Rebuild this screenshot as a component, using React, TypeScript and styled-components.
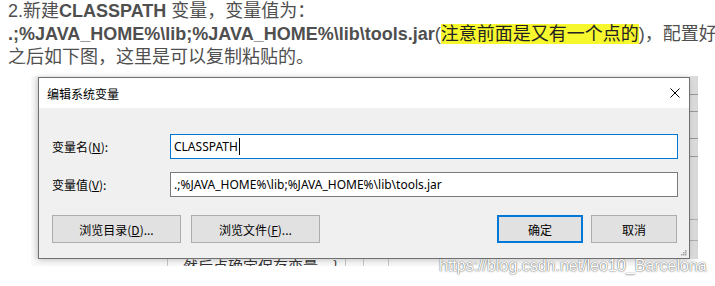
import React from "react";
import styled, { createGlobalStyle } from "styled-components";

const GlobalStyle = createGlobalStyle`
  html, body { margin: 0; padding: 0; background: #fff; }
  body { width: 715px; height: 286px; overflow: hidden; }
`;

const Article = styled.div`
  padding-left: 8px;
  font-family: "Liberation Sans", "Noto Sans CJK SC", sans-serif;
  font-size: 18px;
  line-height: 23px;
  color: #4f4f4f;
  white-space: nowrap;
`;

const Line = styled.div``;

const Strong = styled.b`
  font-size: 18px;
  font-weight: bold;
`;

const Mark = styled.span`
  background: #f7f72e;
  color: #222;
`;

const Shot = styled.div`
  position: relative;
  margin: 7px 0 0 31px;
  width: 667px;
  height: 190px;
  box-sizing: border-box;
  padding: 1px 8px 7px 7px;
  background: linear-gradient(to right, #fbfbfb, #eeeeee 7px, #f7f7f7 7px);
`;

const RightStrip = styled.div`
  position: absolute;
  top: 0;
  right: 0;
  bottom: 7px;
  width: 8px;
  background:
    linear-gradient(#9a9a9a, #9a9a9a) 0 18px / 100% 1px no-repeat,
    linear-gradient(#9a9a9a, #9a9a9a) 0 35px / 100% 1px no-repeat,
    linear-gradient(#9a9a9a, #9a9a9a) 0 62px / 100% 1px no-repeat,
    linear-gradient(#9a9a9a, #9a9a9a) 0 80px / 100% 1px no-repeat,
    linear-gradient(#b0b0b0, #b0b0b0) 0 143px / 100% 1px no-repeat,
    linear-gradient(#b0b0b0, #b0b0b0) 0 164px / 100% 1px no-repeat,
    linear-gradient(to right, #e6e6e6, #d6d6d6);
`;

const BottomStrip = styled.div`
  position: absolute;
  left: 0;
  right: 0;
  bottom: 0;
  height: 7px;
  overflow: hidden;
  background:
    linear-gradient(#c8c8c8, #c8c8c8) 136px 0 / 1px 100% no-repeat,
    linear-gradient(#c8c8c8, #c8c8c8) 314px 0 / 1px 100% no-repeat,
    linear-gradient(#c8c8c8, #c8c8c8) 332px 0 / 1px 100% no-repeat,
    linear-gradient(#c8c8c8, #c8c8c8) 357px 0 / 1px 100% no-repeat,
    #f9f9f9;
`;

const BehindText = styled.span`
  position: absolute;
  left: 152px;
  top: -3px;
  font-family: "Noto Sans CJK SC", sans-serif;
  font-size: 15px;
  line-height: 20px;
  color: #333;
  white-space: nowrap;
`;

const Dialog = styled.div`
  position: relative;
  z-index: 1;
  width: 652px;
  height: 182px;
  box-sizing: border-box;
  border: 1px solid #707070;
  background: #fff;
  box-shadow: 0 1px 6px rgba(0, 0, 0, 0.22);
  font-family: "Noto Sans", "Noto Sans CJK SC", sans-serif;
  font-size: 12px;
  color: #000;
`;

const TitleBar = styled.div`
  height: 30px;
  display: flex;
  align-items: center;
  justify-content: space-between;
  padding: 0 9px 0 8px;
  background: #fff;
  font-family: "Noto Sans CJK SC", sans-serif;
`;

const Body = styled.div`
  position: relative;
  height: 150px;
  box-sizing: border-box;
  padding: 26px 11px 0 13px;
  background: #f0f0f0;
`;

const Field = styled.div`
  display: grid;
  grid-template-columns: 118px 508px;
  align-items: center;
  height: 25px;
  & + & {
    margin-top: 13px;
  }
`;

const Label = styled.div`
  font-family: "Noto Sans CJK SC", sans-serif;
  font-size: 12px;
  line-height: 16px;
`;

const TextBox = styled.div<{ $active?: boolean }>`
  height: 25px;
  box-sizing: border-box;
  border: 1px solid ${(p) => (p.$active ? "#0078d7" : "#7a7a7a")};
  background: #fff;
  padding-left: 3px;
  display: flex;
  align-items: center;
  font-family: "Noto Sans", sans-serif;
  font-size: 12px;
  white-space: nowrap;
`;

const Caret = styled.span`
  display: inline-block;
  width: 1px;
  height: 17px;
  background: #000;
  margin-left: 1px;
`;

const ButtonRow = styled.div`
  display: flex;
  justify-content: space-between;
  margin-top: 18px;
  padding-right: 1px;
`;

const Group = styled.div<{ $gap: number }>`
  display: flex;
  gap: ${(p) => p.$gap}px;
`;

const Button = styled.div<{ $w: number; $default?: boolean }>`
  width: ${(p) => p.$w}px;
  height: 28px;
  box-sizing: border-box;
  border: ${(p) => (p.$default ? "2px solid #0078d7" : "1px solid #adadad")};
  background: #e1e1e1;
  display: flex;
  align-items: center;
  justify-content: center;
  font-family: "Noto Sans CJK SC", sans-serif;
  font-size: 12px;
`;

const Grip = styled.svg`
  position: absolute;
  right: 2px;
  bottom: 2px;
`;

const Watermark = styled.div`
  position: absolute;
  z-index: 2;
  left: 408px;
  top: 182px;
  font-family: "Liberation Sans", sans-serif;
  font-size: 16px;
  line-height: 16px;
  color: #ffffff;
  text-shadow: 0 0 1px rgba(0, 0, 0, 0.55), 0 0 1px rgba(0, 0, 0, 0.35), 0 1px 2px rgba(0, 0, 0, 0.2);
  white-space: nowrap;
`;

export default function App() {
  return (
    <>
      <GlobalStyle />
      <Article>
        <Line>
          2.新建<Strong>CLASSPATH</Strong> 变量，变量值为：
        </Line>
        <Line>
          <Strong>.;%JAVA_HOME%\lib;%JAVA_HOME%\lib\tools.jar</Strong>(
          <Mark>注意前面是又有一个点的</Mark>)，配置好
        </Line>
        <Line>之后如下图，这里是可以复制粘贴的。</Line>
      </Article>
      <Shot>
        <RightStrip />
        <BottomStrip>
          <BehindText>{"然后点确定保存变量　}"}</BehindText>
        </BottomStrip>
        <Dialog>
          <TitleBar>
            <span>编辑系统变量</span>
            <svg width="10" height="10" viewBox="0 0 10 10">
              <path d="M0.5 0.5 L9.5 9.5 M9.5 0.5 L0.5 9.5" stroke="#000" strokeWidth="1" fill="none" />
            </svg>
          </TitleBar>
          <Body>
            <Field>
              <Label>
                变量名(<u>N</u>):
              </Label>
              <TextBox $active>
                CLASSPATH
                <Caret />
              </TextBox>
            </Field>
            <Field>
              <Label>
                变量值(<u>V</u>):
              </Label>
              <TextBox>.;%JAVA_HOME%\lib;%JAVA_HOME%\lib\tools.jar</TextBox>
            </Field>
            <ButtonRow>
              <Group $gap={10}>
                <Button $w={129}>
                  浏览目录(<u>D</u>)...
                </Button>
                <Button $w={129}>
                  浏览文件(<u>F</u>)...
                </Button>
              </Group>
              <Group $gap={8}>
                <Button $w={86} $default>
                  确定
                </Button>
                <Button $w={86}>取消</Button>
              </Group>
            </ButtonRow>
            <Grip width="7" height="7" viewBox="0 0 7 7">
              <rect x="5" y="1" width="1.5" height="1.5" fill="#a0a0a0" />
              <rect x="3" y="3" width="1.5" height="1.5" fill="#a0a0a0" />
              <rect x="5" y="3" width="1.5" height="1.5" fill="#a0a0a0" />
              <rect x="1" y="5" width="1.5" height="1.5" fill="#a0a0a0" />
              <rect x="3" y="5" width="1.5" height="1.5" fill="#a0a0a0" />
              <rect x="5" y="5" width="1.5" height="1.5" fill="#a0a0a0" />
            </Grip>
          </Body>
        </Dialog>
        <Watermark>https://blog.csdn.net/leo10_Barcelona</Watermark>
      </Shot>
    </>
  );
}
